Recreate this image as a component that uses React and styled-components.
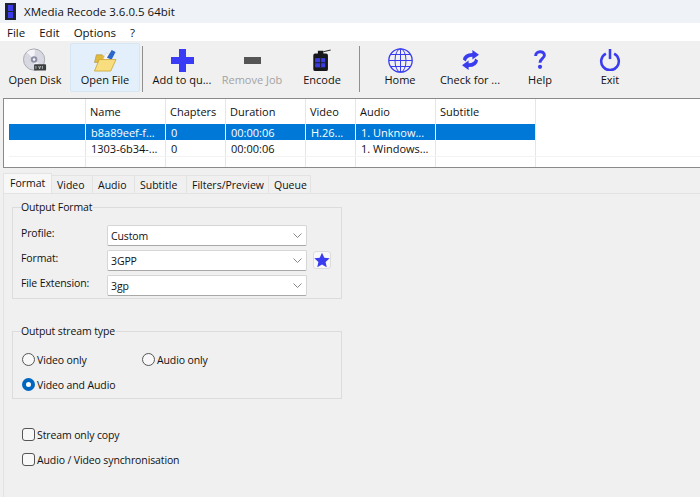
import React from 'react';
import styled, { createGlobalStyle } from 'styled-components';

const GlobalStyle = createGlobalStyle`
    html, body {
        margin: 0;
        padding: 0;
        background: #f0f0f0;
    }
    * {
        box-sizing: border-box;
    }
`;

const Window = styled.div`
    width: 700px;
    height: 497px;
    overflow: hidden;
    display: flex;
    flex-direction: column;
    background: #f0f0f0;
    color: #111;
    font-family: "Open Sans", "Noto Sans", sans-serif;
    font-size: 11px;
`;

const TitleBar = styled.div`
    height: 23px;
    display: flex;
    align-items: center;
    gap: 8px;
    padding-left: 5px;
    background: #eff3f7;
    font-size: 11.5px;
`;

const MenuBar = styled.div`
    height: 18px;
    display: flex;
    align-items: center;
    gap: 14px;
    padding-left: 7px;
    background: #fff;
    font-size: 11.5px;
`;

const Toolbar = styled.div`
    height: 57px;
    display: flex;
    padding-top: 2px;
    background: #f0f0f0;
`;

const ToolButton = styled.div`
    width: 70px;
    height: 49px;
    display: flex;
    flex-direction: column;
    align-items: center;
    justify-content: space-between;
    padding: 4px 0 4px;
    white-space: nowrap;
    border-radius: 2px;
    border: 1px solid ${p => (p.$active ? '#d6e6f3' : 'transparent')};
    background: ${p => (p.$active ? '#e3f0fb' : 'transparent')};
    color: ${p => (p.$disabled ? '#a3a3a3' : '#111')};
`;

const ToolIcon = styled.div`
    height: 24px;
    display: flex;
    align-items: center;
    justify-content: center;
`;

const ToolSeparator = styled.div`
    width: 1px;
    height: 46px;
    margin: 3px ${p => p.$right}px 0 ${p => p.$left}px;
    background: #8f8f8f;
`;

const FileList = styled.div`
    height: 70px;
    margin-left: 3px;
    padding-left: 5px;
    background: #fff;
    border: 1px solid #8a8a8a;
    border-right: none;
    display: flex;
    flex-direction: column;
`;

const Row = styled.div`
    display: grid;
    grid-template-columns: 76px 80px 60px 80px 50px 80px 100px 1fr;
    height: ${p => p.$height}px;
    color: ${p => (p.$selected ? '#fff' : '#111')};
    border-bottom: ${p => (p.$line ? '1px solid #f3f3f3' : 'none')};
`;

const Cell = styled.div`
    display: flex;
    align-items: center;
    padding-left: ${p => (p.$head ? 4 : 5)}px;
    background: ${p => (p.$selected ? '#0078d7' : 'transparent')};
    border-left: ${p => (p.$first ? 'none' : `1px solid ${p.$selected ? '#fff' : '#e6e6e6'}`)};
    white-space: nowrap;
    overflow: hidden;
`;

const Tabs = styled.div`
    display: flex;
    align-items: flex-end;
    height: 20px;
    margin: 5px 0 0 3px;
    font-size: 10.5px;
`;

const Tab = styled.div`
    height: ${p => (p.$active ? 20 : 18)}px;
    width: ${p => p.$width}px;
    display: flex;
    align-items: center;
    padding-left: ${p => (p.$active ? 6 : 5)}px;
    padding-bottom: ${p => (p.$active ? 2 : 0)}px;
    background: ${p => (p.$active ? '#f7f7f7' : '#f0f0f0')};
    border: 1px solid #e3e3e3;
    border-left-width: ${p => (p.$active ? 1 : 0)}px;
    border-bottom: none;
`;

const TabPanel = styled.div`
    flex: 1;
    margin-left: 3px;
    padding: 6px 0 0 8px;
    background: #f0f0f0;
    border-top: 1px solid #e3e3e3;
    border-left: 1px solid #e3e3e3;
    font-size: 10.5px;
    letter-spacing: -0.12px;
`;

const Group = styled.fieldset`
    width: 330px;
    height: ${p => p.$height}px;
    margin: 0 0 ${p => p.$bottom}px;
    padding: 0 0 0 8px;
    border: 1px solid #dcdcdc;
`;

const Legend = styled.legend`
    padding: 0 1px 0 0;
    line-height: 14px;
`;

const FormRows = styled.div`
    display: flex;
    flex-direction: column;
    gap: 4px;
    padding-top: 11px;
`;

const FormRow = styled.div`
    display: flex;
    align-items: center;
    height: 21px;
`;

const FieldLabel = styled.div`
    width: 86px;
    padding-bottom: 6px;
`;

const Select = styled.div`
    width: 200px;
    height: 21px;
    display: flex;
    align-items: center;
    justify-content: space-between;
    padding: 0 4px 0 3px;
    background: #fff;
    border: 1px solid #d6d6d6;
    border-bottom-color: #a8a8a8;
    border-radius: 2px;
`;

const StarButton = styled.div`
    width: 18px;
    height: 18px;
    margin: 0 0 2px 6px;
    display: flex;
    align-items: center;
    justify-content: center;
    background: #f8f8f8;
    border: 1px solid #dcdcdc;
    border-radius: 3px;
`;

const ChoiceGrid = styled.div`
    display: grid;
    grid-template-columns: 120px 120px;
    grid-auto-rows: 25px;
    padding: 9px 0 0 1px;
`;

const Choice = styled.div`
    display: flex;
    align-items: center;
    gap: 2px;
    height: 25px;
`;

const Radio = styled.span`
    width: 13px;
    height: 13px;
    border-radius: 50%;
    background: ${p => (p.$checked ? '#fff' : '#f8f8f8')};
    border: ${p => (p.$checked ? '4px solid #0067c0' : '1px solid #555')};
`;

const Check = styled.span`
    width: 13px;
    height: 13px;
    border-radius: 3px;
    background: #f8f8f8;
    border: 1px solid #555;
`;

const Options = styled.div`
    padding-left: 10px;
`;

const FilmIcon = () => (
    <svg width="11" height="17" viewBox="0 0 11 17">
        <rect width="11" height="17" fill="#1d2230" />
        <rect x="3" y="2" width="5" height="6" fill="#3a3ae8" />
        <rect x="3" y="9" width="5" height="6" fill="#3a3ae8" />
    </svg>
);

const DiskIcon = () => (
    <svg width="24" height="24" viewBox="0 0 26 25">
        <circle cx="12" cy="12" r="11.5" fill="#d8d8e2" stroke="#a5a5ad" />
        <path d="M12 12 L4 4 A11 11 0 0 1 13 1.5 Z" fill="#f4f4f8" />
        <path d="M12 12 L21 20 A11 11 0 0 1 12 23 Z" fill="#efeff4" />
        <circle cx="12" cy="12" r="3.5" fill="#8e8ea6" />
        <circle cx="12" cy="12" r="1.3" fill="#fff" />
        <rect x="12" y="17" width="13" height="7" rx="1" fill="#3c3f3f" />
        <path d="M14 19 v3 M17 19 l1 3 l1 -3 M21 19 v3" stroke="#ddd" strokeWidth=".8" fill="none" />
    </svg>
);

const FolderIcon = () => (
    <svg width="24" height="23" viewBox="0 0 24 24">
        <path d="M3 6 h6 l2 2 h5 v6 H1 Z" fill="#e0b93f" stroke="#b08f3a" strokeWidth=".6" />
        <path d="M10 11 L13 4 L18 6 L16 12 Z" fill="#f7f7f2" stroke="#c8c8c0" strokeWidth=".4" />
        <path d="M14 9 L19 1 L23 3 L19 11 Z" fill="#2b66c8" />
        <path d="M6 11 H23.5 L18 23 H1 Z" fill="#f8de7e" stroke="#c9a02e" strokeWidth=".8" />
    </svg>
);

const PlusIcon = () => (
    <svg width="23" height="23" viewBox="0 0 23 23">
        <path d="M8 0 H15 V8 H23 V15 H15 V23 H8 V15 H0 V8 H8 Z" fill="#3a3cf5" />
    </svg>
);

const MinusIcon = () => (
    <svg width="17" height="7" viewBox="0 0 17 7">
        <rect width="17" height="7" fill="#555" />
    </svg>
);

const EncodeIcon = () => (
    <svg width="20" height="22" viewBox="0 0 21 24">
        <path d="M3 5 H6 V2 H12 V5 H15 Q17 5 17 7 V22 Q17 24 15 24 H3 Q1 24 1 22 V7 Q1 5 3 5 Z" fill="#16181c" />
        <path d="M12 3 L20 1" stroke="#333" strokeWidth="1.2" />
        <rect x="3" y="10" width="11" height="10" fill="#3a3ce0" />
        <path d="M9 10 V20 M3 15 H14" stroke="#14161c" strokeWidth="1" />
    </svg>
);

const GlobeIcon = () => (
    <svg width="25" height="25" viewBox="0 0 25 25" fill="none" stroke="#3a3cf0" strokeWidth="1">
        <circle cx="12.5" cy="12.5" r="11.7" strokeWidth="1.3" />
        <ellipse cx="12.5" cy="12.5" rx="5.5" ry="11.7" />
        <path d="M12.5 1 V24 M1 12.5 H24 M2.8 6.5 H22.2 M2.8 18.5 H22.2" />
    </svg>
);

const RefreshIcon = () => (
    <svg width="17" height="20" viewBox="0 0 18 21" fill="#3a3cf0">
        <path d="M11 0 L18 5 L11 10 V7 Q5 7 4 12 L1 10 Q2 3 11 3 Z" />
        <path d="M7 21 L0 16 L7 11 V14 Q13 14 14 9 L17 11 Q16 18 7 18 Z" />
    </svg>
);

const HelpIcon = () => (
    <svg width="12" height="20" viewBox="0 0 15 23" fill="none">
        <path d="M2 6.5 C2 -0.5 13 -0.5 13 5.5 C13 9.5 7.5 9.5 7.5 15" stroke="#3a3cf0" strokeWidth="3.6" />
        <circle cx="7.5" cy="20" r="2.6" fill="#3a3cf0" />
    </svg>
);

const PowerIcon = () => (
    <svg width="22" height="22" viewBox="0 0 23 24" fill="none" stroke="#3a3cf0" strokeWidth="2.8">
        <path d="M7 5 A9.6 9.6 0 1 0 16 5" />
        <path d="M11.5 0 V11" />
    </svg>
);

const StarIcon = () => (
    <svg width="16" height="16" viewBox="0 0 24 24">
        <path d="M12 1 L15.4 8.6 L23.5 9.4 L17.4 14.9 L19.1 23 L12 18.8 L4.9 23 L6.6 14.9 L0.5 9.4 L8.6 8.6 Z" fill="#3a3cf0" />
    </svg>
);

const Chevron = () => (
    <svg width="9" height="5" viewBox="0 0 9 5" fill="none" stroke="#888" strokeWidth="1">
        <path d="M.5 .5 L4.5 4.5 L8.5 .5" />
    </svg>
);

const firstTools = [
    { label: 'Open Disk', icon: <DiskIcon /> },
    { label: 'Open File', icon: <FolderIcon />, active: true },
];
const secondTools = [
    { label: 'Add to qu...', icon: <PlusIcon /> },
    { label: 'Remove Job', icon: <MinusIcon />, disabled: true },
    { label: 'Encode', icon: <EncodeIcon /> },
];
const thirdTools = [
    { label: 'Home', icon: <GlobeIcon /> },
    { label: 'Check for ...', icon: <RefreshIcon /> },
    { label: 'Help', icon: <HelpIcon /> },
    { label: 'Exit', icon: <PowerIcon /> },
];

const rows = [
    { height: 25, head: true, cells: ['', 'Name', 'Chapters', 'Duration', 'Video', 'Audio', 'Subtitle'] },
    { height: 16, selected: true, cells: ['', 'b8a89eef-f...', '0', '00:00:06', 'H.26...', '1. Unknow...', ''] },
    { height: 17, line: true, cells: ['', '1303-6b34-...', '0', '00:00:06', '', '1. Windows...', ''] },
    { height: 10, cells: ['', '', '', '', '', '', ''] },
];

const tabs = [
    { label: 'Format', width: 49, active: true },
    { label: 'Video', width: 41 },
    { label: 'Audio', width: 42 },
    { label: 'Subtitle', width: 52 },
    { label: 'Filters/Preview', width: 82 },
    { label: 'Queue', width: 42 },
];

const renderTool = tool => (
    <ToolButton key={tool.label} $active={tool.active} $disabled={tool.disabled}>
        <ToolIcon>{tool.icon}</ToolIcon>
        {tool.label}
    </ToolButton>
);

const FormatRow = ({ label, value, children }) => (
    <FormRow>
        <FieldLabel>{label}</FieldLabel>
        <Select>
            {value}
            <Chevron />
        </Select>
        {children}
    </FormRow>
);

const App = () => (
    <Window>
        <GlobalStyle />
        <TitleBar>
            <FilmIcon />
            XMedia Recode 3.6.0.5 64bit
        </TitleBar>
        <MenuBar>
            <span>File</span>
            <span>Edit</span>
            <span>Options</span>
            <span>?</span>
        </MenuBar>
        <Toolbar>
            {firstTools.map(renderTool)}
            <ToolSeparator $left={2} $right={4} />
            {secondTools.map(renderTool)}
            <ToolSeparator $left={2} $right={5} />
            {thirdTools.map(renderTool)}
        </Toolbar>
        <FileList>
            {rows.map((row, i) => (
                <Row key={i} $height={row.height} $selected={row.selected} $line={row.line}>
                    {row.cells.map((cell, j) => (
                        <Cell key={j} $first={j === 0} $head={row.head} $selected={row.selected}>
                            {cell}
                        </Cell>
                    ))}
                    <Cell />
                </Row>
            ))}
        </FileList>
        <Tabs>
            {tabs.map(tab => (
                <Tab key={tab.label} $width={tab.width} $active={tab.active}>
                    {tab.label}
                </Tab>
            ))}
        </Tabs>
        <TabPanel>
            <Group $height={99} $bottom={25}>
                <Legend>Output Format</Legend>
                <FormRows>
                    <FormatRow label="Profile:" value="Custom" />
                    <FormatRow label="Format:" value="3GPP">
                        <StarButton>
                            <StarIcon />
                        </StarButton>
                    </FormatRow>
                    <FormatRow label="File Extension:" value="3gp" />
                </FormRows>
            </Group>
            <Group $height={75} $bottom={23}>
                <Legend>Output stream type</Legend>
                <ChoiceGrid>
                    <Choice>
                        <Radio />
                        Video only
                    </Choice>
                    <Choice>
                        <Radio />
                        Audio only
                    </Choice>
                    <Choice>
                        <Radio $checked />
                        Video and Audio
                    </Choice>
                </ChoiceGrid>
            </Group>
            <Options>
                <Choice>
                    <Check />
                    Stream only copy
                </Choice>
                <Choice>
                    <Check />
                    Audio / Video synchronisation
                </Choice>
            </Options>
        </TabPanel>
    </Window>
);

export default App;
